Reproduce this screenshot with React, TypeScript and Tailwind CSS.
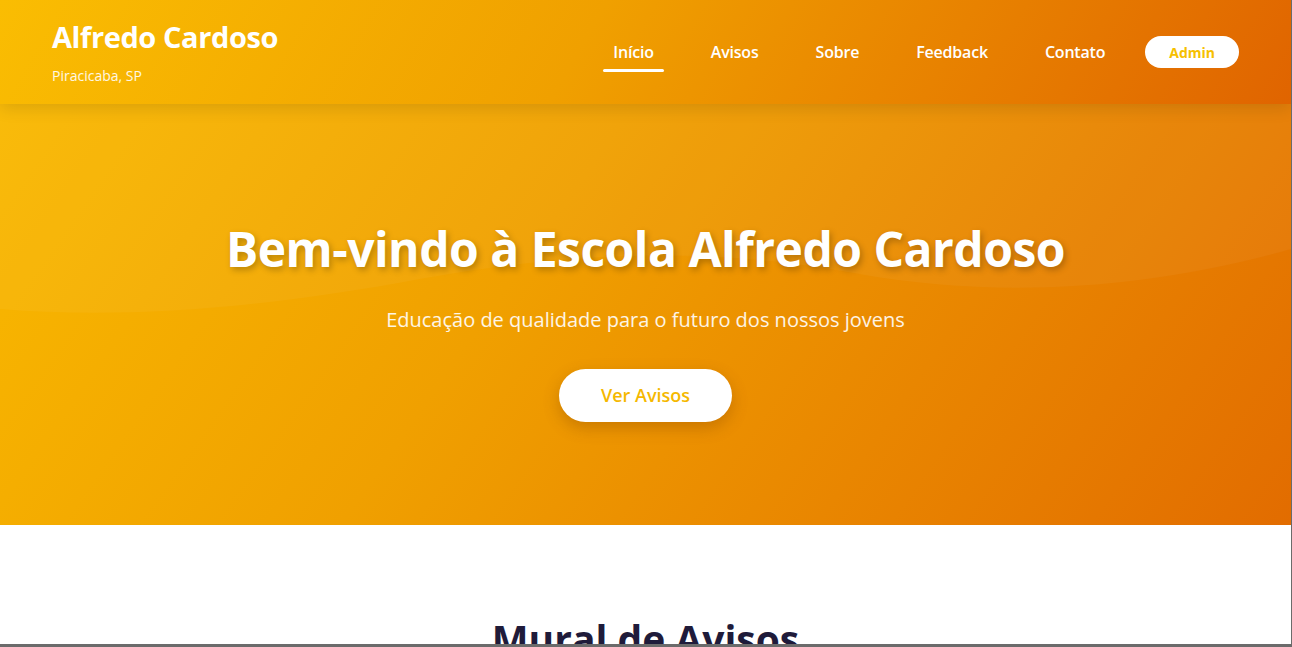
import type { ReactNode } from "react";

const navItems = ["Início", "Avisos", "Sobre", "Feedback", "Contato"];

function NavLink({ children, active }: { children: ReactNode; active?: boolean }) {
  return (
    <a
      href="#"
      className="relative px-[10px] py-2 text-[16px] font-semibold tracking-[-0.2px] text-white"
    >
      {children}
      {active && (
        <span className="absolute bottom-0 left-0 h-[3px] w-full rounded-full bg-white" />
      )}
    </a>
  );
}

export default function App() {
  return (
    <div
      className="relative h-[647px] overflow-hidden border-b-[3px] border-r border-[#6b6b6b] bg-white"
      style={{ fontFamily: '"Open Sans", "Noto Sans", sans-serif' }}
    >
      {/* header */}
      <header className="relative z-10 flex h-[104px] items-center justify-between bg-[linear-gradient(120deg,#fabd02_0%,#f0a000_45%,#e06400_100%)] px-[52px] shadow-[0_4px_16px_rgba(0,0,0,0.12)]">
        <div className="flex flex-col">
          <h1 className="text-[29px] font-bold leading-[34px] tracking-[-0.4px] text-white">
            Alfredo Cardoso
          </h1>
          <p className="mt-[13px] text-[14px] leading-[18px] text-white/90">Piracicaba, SP</p>
        </div>
        <nav className="flex items-center gap-[37px]">
          {navItems.map((item, i) => (
            <NavLink key={item} active={i === 0}>
              {item}
            </NavLink>
          ))}
          <button className="ml-[-7px] h-[32px] rounded-full bg-white px-[24px] text-[14px] font-bold text-[#f6c000]">
            Admin
          </button>
        </nav>
      </header>

      {/* hero */}
      <section className="relative flex h-[421px] flex-col items-center bg-[linear-gradient(125deg,#f9b900_0%,#f0a000_40%,#e26c00_100%)] pt-[116px] text-center">
        <svg
          className="absolute inset-x-0 top-0 h-[220px] w-full"
          viewBox="0 0 1292 220"
          preserveAspectRatio="none"
        >
          <path
            d="M0 0 H1292 V145 C1150 185 1000 195 860 170 C700 140 560 150 420 175 C260 205 120 215 0 205 Z"
            fill="#ffffff"
            fillOpacity="0.04"
          />
        </svg>
        <h2 className="relative text-[48px] font-bold leading-[58px] tracking-[-0.5px] text-white [text-shadow:2px_3px_6px_rgba(0,0,0,0.25)]">
          Bem-vindo à Escola Alfredo Cardoso
        </h2>
        <p className="relative mt-[28px] text-[20px] leading-[28px] text-white/90">
          Educação de qualidade para o futuro dos nossos jovens
        </p>
        <button className="relative mt-[35px] h-[53px] w-[173px] rounded-full bg-white text-[18px] font-semibold text-[#f5b800] shadow-[0_6px_16px_rgba(120,60,0,0.3)]">
          Ver Avisos
        </button>
      </section>

      {/* avisos */}
      <section className="flex flex-col items-center pt-[90px]">
        <h2 className="text-[39px] font-bold leading-[48px] text-[#1f1b3a]">Mural de Avisos</h2>
      </section>
    </div>
  );
}
